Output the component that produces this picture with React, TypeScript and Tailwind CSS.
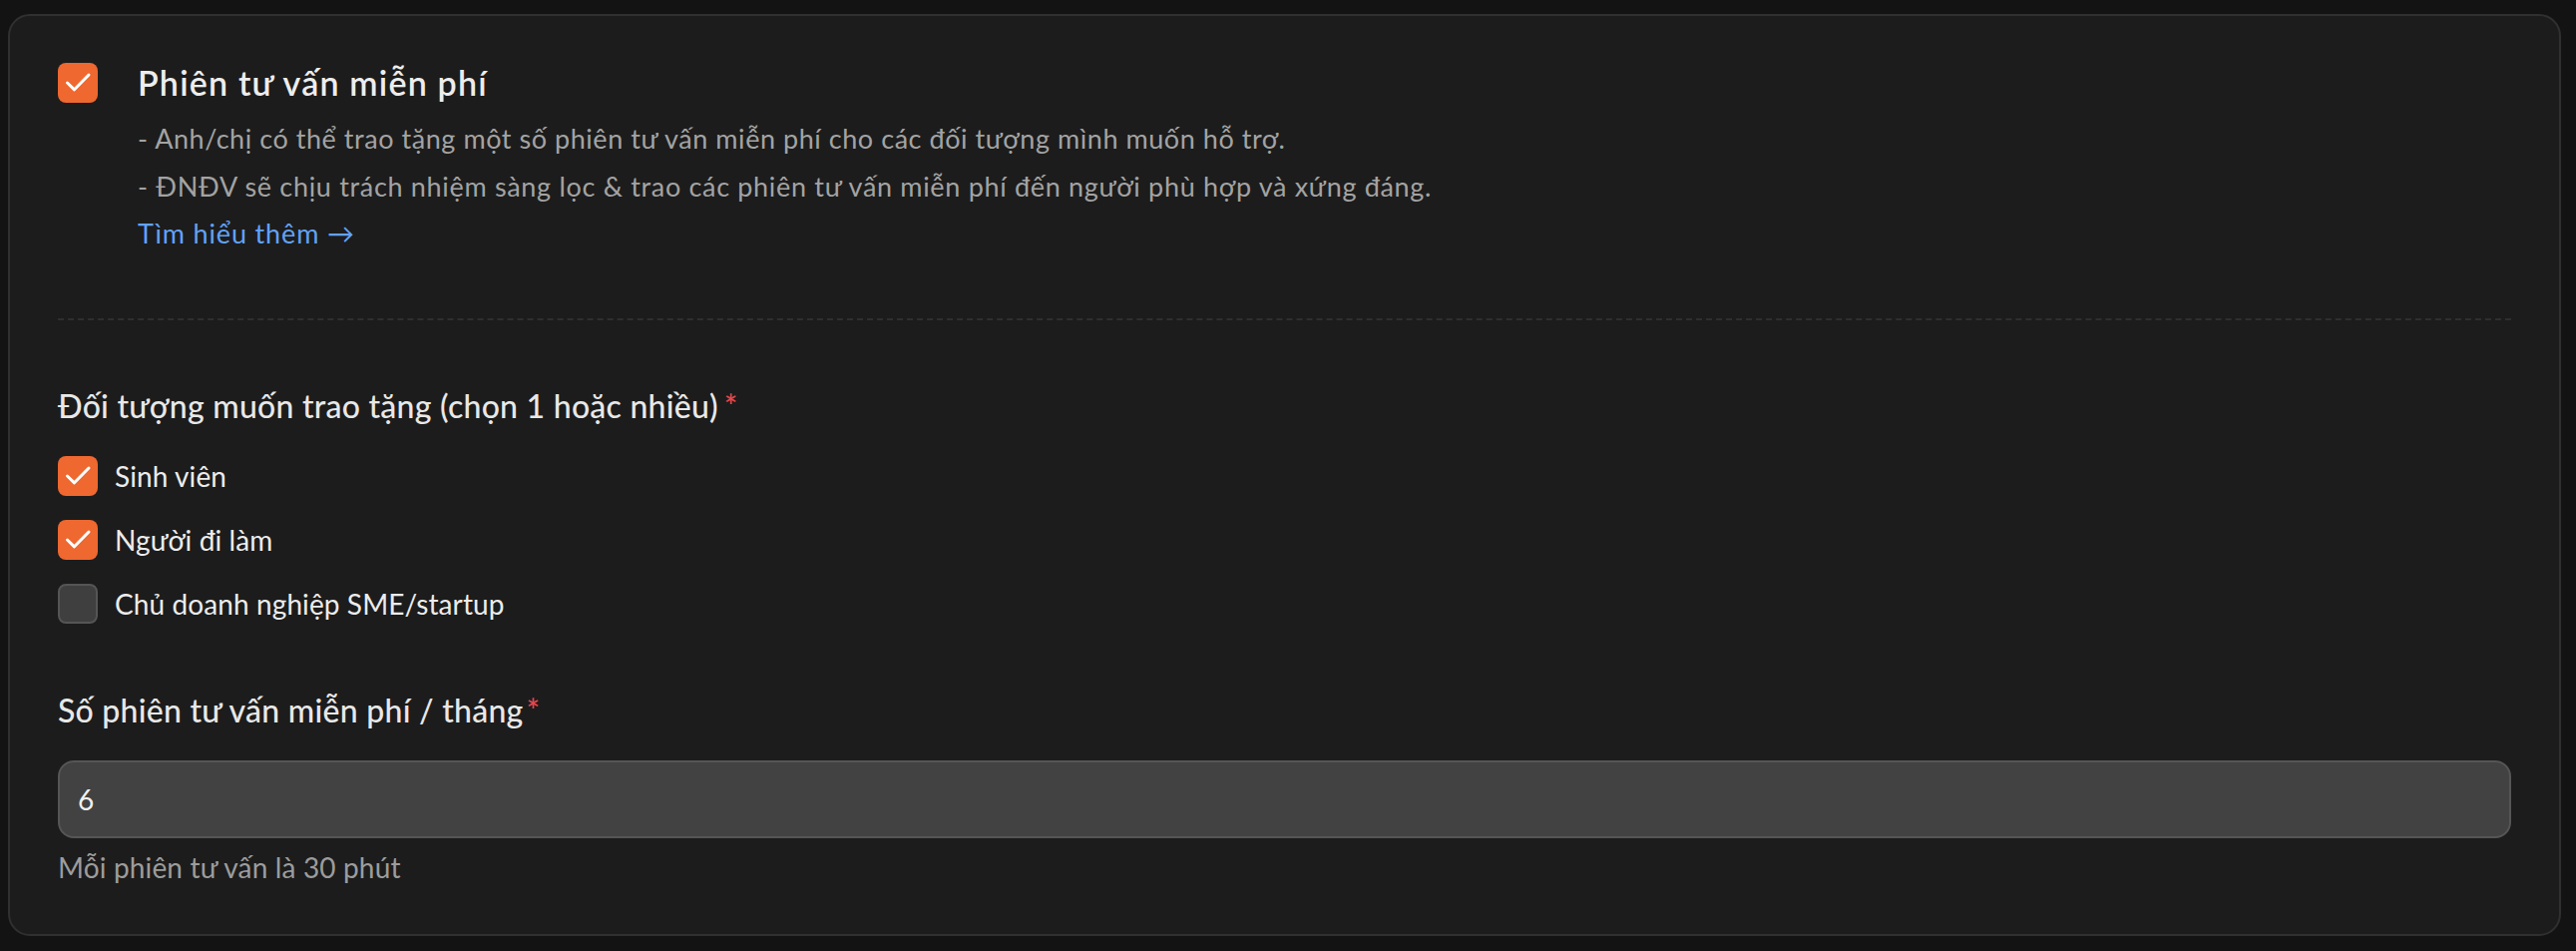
import React from "react";

const font = { fontFamily: "Lato, 'Noto Sans', sans-serif" };

function Check({ checked }: { checked: boolean }) {
  if (!checked) {
    return (
      <span className="flex h-[40px] w-[40px] shrink-0 rounded-[8px] border-2 border-[#555555] bg-[#3f3f3f]" />
    );
  }
  return (
    <span className="flex h-[40px] w-[40px] shrink-0 items-center justify-center rounded-[8px] bg-[#ee6830]">
      <svg width="40" height="40" viewBox="0 0 40 40" fill="none">
        <path d="M9.5 20L16.5 26.8L31 12" stroke="#ffffff" strokeWidth="3" strokeLinecap="round" strokeLinejoin="round" />
      </svg>
    </span>
  );
}

export default function App() {
  const options = [
    { label: "Sinh viên", checked: true },
    { label: "Người đi làm", checked: true },
    { label: "Chủ doanh nghiệp SME/startup", checked: false },
  ];
  return (
    <div style={font} className="min-h-[953px] bg-[#131313] pl-[8px] pr-[15px] pt-[14px] pb-[15px]">
      <div className="rounded-[22px] border-2 border-[#303030] bg-[#1c1c1c] px-[48px] pt-[47px] pb-[49px]">
        <div className="flex gap-[40px]">
          <Check checked />
          <div className="flex flex-col">
            <h2 className="text-[34px] leading-[40px] font-semibold tracking-[1.2px] text-[#ededed]">Phiên tư vấn miễn phí</h2>
            <p className="mt-[12px] text-[27px] leading-[48px] tracking-[0.55px] text-[#a3a3a3]">
              - Anh/chị có thể trao tặng một số phiên tư vấn miễn phí cho các đối tượng mình muốn hỗ trợ.
            </p>
            <p className="text-[27px] leading-[48px] tracking-[0.68px] text-[#a3a3a3]">
              - ĐNĐV sẽ chịu trách nhiệm sàng lọc &amp; trao các phiên tư vấn miễn phí đến người phù hợp và xứng đáng.
            </p>
            <a className="text-[27px] leading-[46px] tracking-[0.85px] text-[#62a2f8]">Tìm hiểu thêm →</a>
          </div>
        </div>

        <div className="mt-[62px] border-t-2 border-dashed border-[#2f2f2f]" />

        <div className="mt-[66px] text-[32px] leading-[40px] font-medium tracking-[0.25px] text-[#e8e8e8]">
          Đối tượng muốn trao tặng (chọn 1 hoặc nhiều)<span className="ml-[6px] text-[#e5484d]">*</span>
        </div>
        <div className="mt-[30px] flex flex-col gap-[24px]">
          {options.map((o) => (
            <label key={o.label} className="flex items-center gap-[17px]">
              <Check checked={o.checked} />
              <span className="text-[28px] leading-[40px] tracking-[0.1px] text-[#ececec]">{o.label}</span>
            </label>
          ))}
        </div>

        <div className="mt-[67px] text-[32px] leading-[40px] font-medium tracking-[0.25px] text-[#e8e8e8]">
          Số phiên tư vấn miễn phí / tháng<span className="ml-[3px] text-[#e5484d]">*</span>
        </div>
        <div className="mt-[30px] flex h-[78px] items-center rounded-[16px] border-2 border-[#565656] bg-[#424242] px-[18px]">
          <span className="text-[28px] text-[#f0f0f0]">6</span>
        </div>
        <div className="mt-[11px] text-[28px] leading-[36px] tracking-[0.15px] text-[#9c9c9c]">Mỗi phiên tư vấn là 30 phút</div>
      </div>
    </div>
  );
}
